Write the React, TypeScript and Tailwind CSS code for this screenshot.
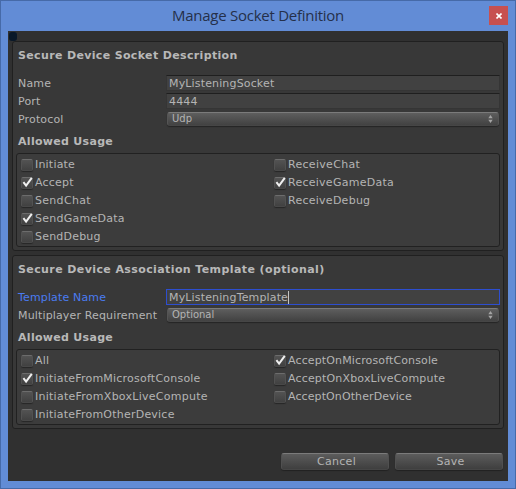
import React from "react";

function Check({ label, on = false, spacing = "tracking-[0.2px]" }: { label: string; on?: boolean; spacing?: string }) {
  return (
    <div className="flex h-[18px] items-start">
      <span className="relative mt-[4px] h-[12px] w-[12px] shrink-0 rounded-[2px] border border-[#525252] border-t-[#6c6c6c] border-b-[#484848] bg-linear-to-b from-[#535353] to-[#414141] shadow-[0_1px_1px_#262626]">
        {on && (
          <svg className="absolute -top-px -left-px" width="13" height="12" viewBox="0 0 13 12">
            <path d="M2.4 5.2 L5.1 8.6 L10.8 0.9" fill="none" stroke="#f0f0f0" strokeWidth="2" />
          </svg>
        )}
      </span>
      <span className={"mt-[3px] ml-[2px] " + spacing}>{label}</span>
    </div>
  );
}

function Row({ label, active = false, children }: { label: string; active?: boolean; children: React.ReactNode }) {
  return (
    <div className="flex h-[18px] items-center">
      <span className={"w-[149px] shrink-0 pt-[2px] pl-px tracking-[0.15px]" + (active ? " text-[#4a7cf2]" : "")}>{label}</span>
      {children}
    </div>
  );
}

function Field({ value, focused = false }: { value: string; focused?: boolean }) {
  return (
    <div
      className={
        "flex h-4 w-[334px] items-center border bg-[#414141] pl-[2px] " +
        (focused ? "border-[#2d4ed0]" : "border-[#353535] border-t-[#1f1f1f]")
      }
    >
      <span className="pt-px tracking-[0.15px]">{value}</span>
      {focused && <span className="h-[13px] w-px bg-[#c4c4c4]" />}
    </div>
  );
}

function Select({ value }: { value: string }) {
  return (
    <div className="ml-px flex h-[14px] w-[332px] items-center justify-between rounded-[3px] border border-[#555] border-t-[#7b7b7b] border-b-[#464646] bg-linear-to-b from-[#5e5e5e] to-[#424242] pr-[5px] pl-[4px] text-[10px] shadow-[0_1px_1px_#252525]">
      <span className="tracking-[0px]">{value}</span>
      <svg width="5" height="8" viewBox="0 0 5 8" fill="#a5a5a5">
        <path d="M2.5 0 L4.7 3.3 H0.3 Z M0.3 4.7 H4.7 L2.5 8 Z" />
      </svg>
    </div>
  );
}

function Button({ label }: { label: string }) {
  return (
    <div className="flex h-[17px] w-[108px] items-center justify-center rounded-[3px] border border-[#505050] border-t-[#7b7b7b] border-b-[#464646] bg-linear-to-b from-[#5c5c5c] to-[#3f3f3f] pl-[3px] shadow-[0_1px_1px_#222]">
      <span className="tracking-[0.3px]">{label}</span>
    </div>
  );
}

const group = "w-[492px] rounded-[3px] border border-[#202020] bg-[#383838] px-[3px]";
const inner = "grid grid-cols-[253px_1fr] rounded-[3px] border border-[#212121] bg-[#3c3c3c] pl-[4px] pt-px";
const heading = "pl-[2px] font-bold leading-[18px] text-[#b8b8b8]";

export default function App() {
  return (
    <div className="flex h-[489px] w-[516px] flex-col border border-[#466aa8] bg-[#628cd6] px-[7px] pb-[7px] font-['DejaVu_Sans',sans-serif] text-[11px] leading-[14px] whitespace-nowrap text-[#b4b4b4]">
      <div className="flex h-[30px] shrink-0 items-start">
        <span className="w-[19px]" />
        <h1 className="flex-1 pt-[4px] text-center font-['Open_Sans',sans-serif] text-[15px] leading-[20px] tracking-[-0.26px] text-[#25304a]">
          Manage Socket Definition
        </h1>
        <div className="mt-[5px] flex h-[19px] w-[19px] items-center justify-center bg-[#c75050]">
          <svg width="6" height="6" viewBox="0 0 6 6">
            <path d="M0.5 0.5 L5.5 5.5 M5.5 0.5 L0.5 5.5" stroke="#fff" strokeWidth="1.6" />
          </svg>
        </div>
      </div>
      <main className="relative flex flex-1 flex-col bg-[#303030] pt-[10px] pl-[4px]">
        <span className="absolute top-px left-px h-[9px] w-2 rounded-[3px] bg-[#091828]" />
        <section className={group + " h-[210px]"}>
          <h2 className={heading + " pt-[5px] tracking-[0.35px]"}>Secure Device Socket Description</h2>
          <div className="mt-[9px] pl-px">
            <Row label="Name"><Field value="MyListeningSocket" /></Row>
            <Row label="Port"><Field value="4444" /></Row>
            <Row label="Protocol"><Select value="Udp" /></Row>
          </div>
          <h3 className={heading + " mt-[5px] tracking-[0.3px]"}>Allowed Usage</h3>
          <div className={inner + " mt-[2px] h-[94px]"}>
            <div>
              <Check label="Initiate" />
              <Check label="Accept" on />
              <Check label="SendChat" spacing="tracking-[0.3px]" />
              <Check label="SendGameData" on spacing="tracking-[0.26px]" />
              <Check label="SendDebug" />
            </div>
            <div>
              <Check label="ReceiveChat" spacing="tracking-[0.3px]" />
              <Check label="ReceiveGameData" on spacing="tracking-[0.26px]" />
              <Check label="ReceiveDebug" spacing="tracking-[0.26px]" />
            </div>
          </div>
        </section>
        <section className={group + " mt-1 h-[174px]"}>
          <h2 className={heading + " pt-[5px] tracking-[0.4px]"}>Secure Device Association Template (optional)</h2>
          <div className="mt-[9px] pl-px">
            <Row label="Template Name" active><Field value="MyListeningTemplate" focused /></Row>
            <Row label="Multiplayer Requirement"><Select value="Optional" /></Row>
          </div>
          <h3 className={heading + " mt-[5px] tracking-[0.3px]"}>Allowed Usage</h3>
          <div className={inner + " mt-[2px] h-[76px]"}>
            <div>
              <Check label="All" />
              <Check label="InitiateFromMicrosoftConsole" on spacing="tracking-[0.22px]" />
              <Check label="InitiateFromXboxLiveCompute" spacing="tracking-[0.26px]" />
              <Check label="InitiateFromOtherDevice" spacing="tracking-[0.22px]" />
            </div>
            <div>
              <Check label="AcceptOnMicrosoftConsole" on spacing="tracking-[0.13px]" />
              <Check label="AcceptOnXboxLiveCompute" spacing="tracking-[0.17px]" />
              <Check label="AcceptOnOtherDevice" spacing="tracking-[0.1px]" />
            </div>
          </div>
        </section>
        <div className="mt-[24px] flex gap-[6px] pl-[269px]">
          <Button label="Cancel" />
          <Button label="Save" />
        </div>
      </main>
    </div>
  );
}
